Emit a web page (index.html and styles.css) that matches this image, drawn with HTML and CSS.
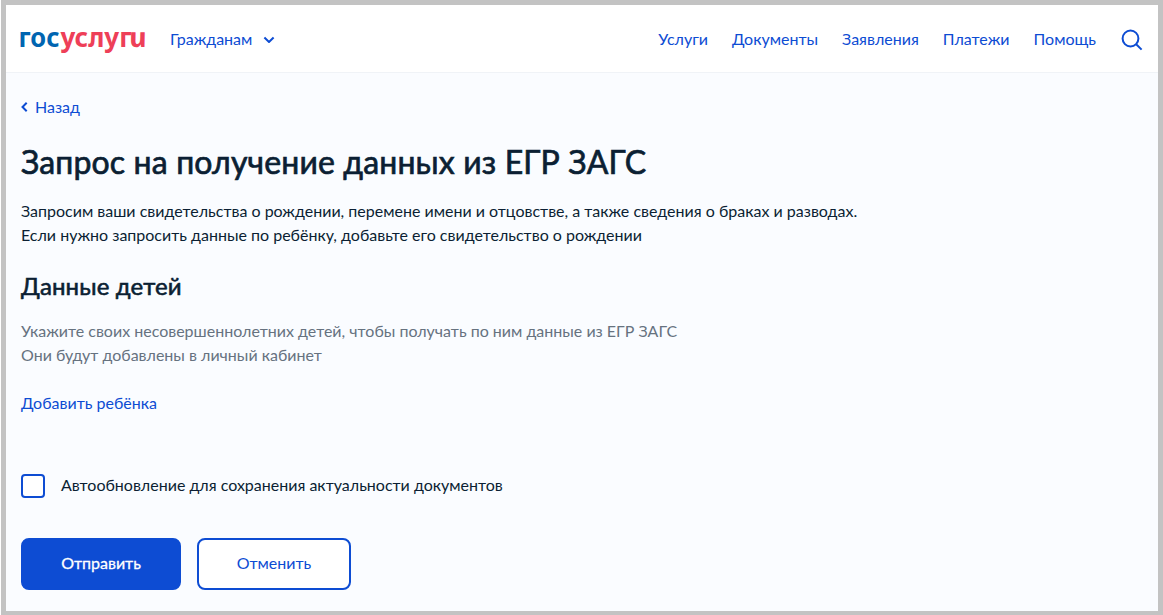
FILE: index.html
```html
<!DOCTYPE html>
<html lang="ru">
<head>
<meta charset="utf-8">
<title>Запрос на получение данных из ЕГР ЗАГС</title>
<link rel="stylesheet" href="styles.css">
</head>
<body>
<div class="page">
  <header class="header">
    <a class="logo" aria-label="госуслуги">
      <svg width="128" height="30" viewBox="0 0 128 30">
        <text class="logo-text logo-blue" x="-1.500" y="22" textLength="41" lengthAdjust="spacingAndGlyphs">гос</text>
        <text class="logo-text logo-red" x="40.500" y="22" textLength="71" lengthAdjust="spacingAndGlyphs">услуг</text>
        <text class="logo-text logo-red logo-italic" transform="translate(110.800 22) skewX(12)" textLength="17.500" lengthAdjust="spacingAndGlyphs">и</text>
      </svg>
    </a>
    <a class="audience">Гражданам
      <svg width="12" height="8" viewBox="0 0 12 8"><path d="M1.400 2.500 6 7l4.600-4.500"/></svg>
    </a>
    <nav class="nav">
      <a>Услуги</a>
      <a>Документы</a>
      <a>Заявления</a>
      <a>Платежи</a>
      <a>Помощь</a>
    </nav>
    <svg class="search" width="22" height="22" viewBox="0 0 22 22"><circle cx="9.500" cy="9.500" r="7.900"/><path d="M15.200 15.200 20.600 20.600"/></svg>
  </header>
  <main class="content">
    <a class="back"><svg width="8" height="10" viewBox="0 0 8 10"><path d="M5.700 .7 1.500 5l4.200 4.300"/></svg>Назад</a>
    <h1 class="title">Запрос на получение данных из ЕГР ЗАГС</h1>
    <p class="text">Запросим ваши свидетельства о рождении, перемене имени и отцовстве, а также сведения о браках и разводах.<br>Если нужно запросить данные по ребёнку, добавьте его свидетельство о рождении</p>
    <h2 class="subtitle">Данные детей</h2>
    <p class="text muted">Укажите своих несовершеннолетних детей, чтобы получать по ним данные из ЕГР ЗАГС<br>Они будут добавлены в личный кабинет</p>
    <a class="add">Добавить ребёнка</a>
    <label class="check"><span class="box"></span><span class="check-text">Автообновление для сохранения актуальности документов</span></label>
    <div class="actions">
      <button class="button primary">Отправить</button>
      <button class="button secondary">Отменить</button>
    </div>
  </main>
</div>
</body>
</html>
```
FILE: styles.css
```css
* { box-sizing: border-box; }
body {
  margin: 0;
  padding-left: 1px;
  background: #fff;
  color: #0b1f33;
  font: 16px/24px Lato, "Open Sans", sans-serif;
}
.page {
  height: 615px;
  border: 5px solid #c3c3c3;
  border-bottom-width: 4px;
  background: #fafcff;
  overflow: hidden;
}
.header {
  display: flex;
  align-items: center;
  height: 68px;
  padding: 2px 15px 0 14px;
  background: #fff;
  border-bottom: 1px solid #f0f3f7;
  color: #0d4cd3;
}
.logo { display: flex; width: 128px; margin-right: 22px; }
.logo svg { overflow: visible; }
.logo-text { font: 700 27px "Noto Sans", sans-serif; }
.logo-italic { font-style: italic; }
.logo-blue { fill: #0065b1; }
.logo-red { fill: #ee3f58; }
.audience { display: flex; align-items: center; gap: 11px; padding-bottom: 2px; }
svg path, svg circle { fill: none; stroke: #0d4cd3; stroke-width: 2; }
.nav { display: flex; gap: 24px; margin-left: auto; padding-bottom: 2px; }
.search { margin-left: 25px; }
.content { padding: 22px 15px 0; }
.back { display: flex; align-items: center; gap: 6px; color: #0d4cd3; }
.title { margin: 23px 0 17px; font-size: 32px; line-height: 40px; font-weight: 400; letter-spacing: .14px; -webkit-text-stroke: .7px #0b1f33; }
.text { margin: 0; }
.subtitle { margin: 23px 0 17px; font-size: 24px; line-height: 32px; font-weight: 400; letter-spacing: .13px; -webkit-text-stroke: .6px #0b1f33; }
.muted { color: #66727f; }
.add { display: block; margin-top: 24px; color: #0d4cd3; }
.check { display: flex; align-items: center; gap: 16px; margin-top: 59px; }
.check-text { padding-bottom: 2px; margin: -1px 0; }
.box { width: 24px; height: 24px; border: 2px solid #0d4cd3; border-radius: 4px; background: #fff; }
.actions { display: flex; gap: 16px; margin-top: 40px; }
.button { height: 52px; padding: 0 0 2px; border: 2px solid #0d4cd3; border-radius: 8px; font: inherit; }
.primary { width: 160px; background: #0d4cd3; color: #fff; -webkit-text-stroke: .3px #fff; }
.secondary { width: 154px; background: #fff; color: #0d4cd3; }
```
